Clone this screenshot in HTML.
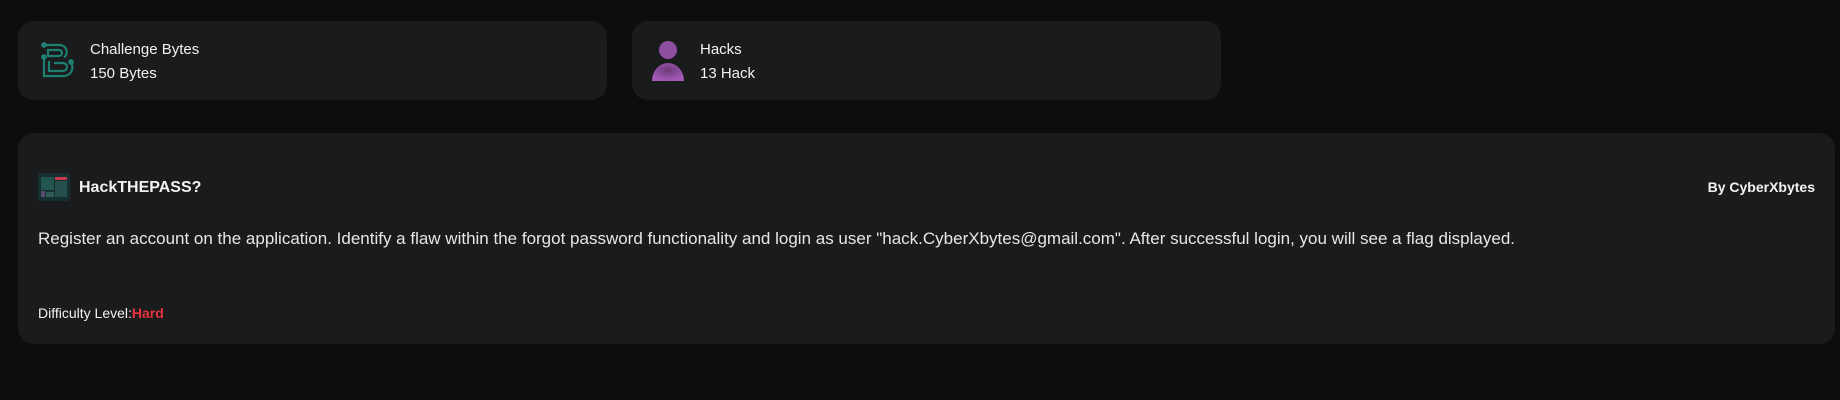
<!DOCTYPE html>
<html><head><meta charset="utf-8"><style>
*{margin:0;padding:0;box-sizing:border-box}
body{width:1840px;height:400px;background:#0c0d0f;font-family:"Liberation Sans",sans-serif;color:#f2f2f2;position:relative;overflow:hidden}
.card{position:absolute;background:#1a1b1d;border-radius:16px}
.t{position:absolute;font-size:15px;white-space:nowrap}
</style></head><body>
<div class="card" style="left:18px;top:21px;width:589px;height:79px"></div>
<div class="card" style="left:632px;top:21px;width:589px;height:79px"></div>
<div class="card" style="left:18px;top:133px;width:1817px;height:211px"></div>

<svg style="position:absolute;left:40px;top:42px" width="36" height="38" viewBox="0 0 36 38" fill="none" stroke="#1f7f70" stroke-width="2.2">
<circle cx="4" cy="3" r="1.8" fill="#1f7f70"/>
<path d="M4 3 H20 a7 7 0 0 1 4 12.5"/>
<path d="M8 8 H19 a3 3 0 0 1 0 6 H8 Z"/>
<circle cx="4" cy="15" r="1.8" fill="#1f7f70"/>
<path d="M4 15 V34 H24 a8.5 8.5 0 0 0 7 -13"/>
<path d="M9 19 V29 H23 a4 4 0 0 0 0 -8 H14"/>
<circle cx="31" cy="20" r="1.8" fill="#1f7f70"/>
</svg>
<div class="t" style="left:90px;top:41px">Challenge Bytes</div>
<div class="t" style="left:90px;top:65px">150 Bytes</div>

<svg style="position:absolute;left:650px;top:40px" width="36" height="44">
<defs><radialGradient id="g" cx="50%" cy="40%" r="60%"><stop offset="0" stop-color="#6d3a78"/><stop offset="1" stop-color="#a45bb8"/></radialGradient></defs>
<circle cx="18" cy="10" r="9" fill="#8e4ea0"/>
<path d="M2 41 a16 18 0 0 1 32 0 Z" fill="url(#g)"/>
</svg>
<div class="t" style="left:700px;top:41px">Hacks</div>
<div class="t" style="left:700px;top:65px">13 Hack</div>

<svg style="position:absolute;left:38px;top:173px" width="32" height="28">
<rect width="32" height="28" rx="3" fill="#16302f"/>
<rect x="3" y="4" width="13" height="13" fill="#235550"/>
<rect x="3" y="18" width="4" height="6" fill="#5a4a70"/>
<rect x="8" y="19" width="8" height="5" fill="#2f5a58"/>
<rect x="17" y="4" width="12" height="3" fill="#c8384f"/>
<rect x="17" y="8" width="12" height="16" fill="#244f4c"/>
</svg>
<div class="t" style="left:79px;top:179px;font-size:16px;font-weight:bold">HackTHEPASS?</div>
<div class="t" style="right:25px;top:179px;font-size:14px;font-weight:bold">By CyberXbytes</div>
<div class="t" style="left:38px;top:229px;font-size:17px;color:#e6e6e6">Register an account on the application. Identify a flaw within the forgot password functionality and login as user "hack.CyberXbytes@gmail.com". After successful login, you will see a flag displayed.</div>
<div class="t" style="left:38px;top:305px;font-size:14px">Difficulty Level:<b style="color:#e8323c">Hard</b></div>
</body></html>
